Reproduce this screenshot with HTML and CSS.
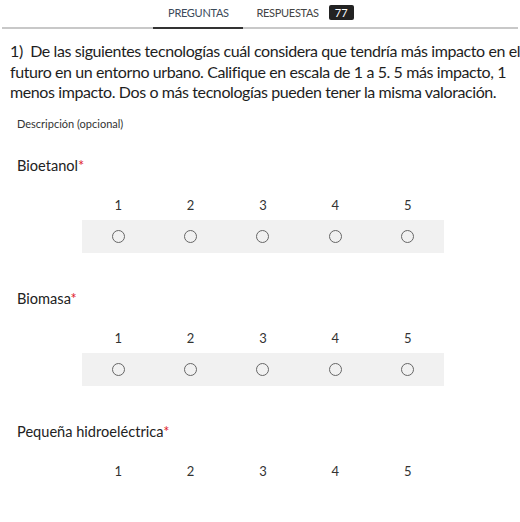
FILE: index.html
```html
<!DOCTYPE html>
<html lang="es">

<head>
    <meta charset="UTF-8">
    <meta name="viewport" content="width=device-width, initial-scale=1.0">
    <title>Encuesta</title>
    <link rel="stylesheet" href="styles.css">
</head>

<body>
    <div class="tabs">
        <span class="tab active">PREGUNTAS</span>
        <span class="tab">RESPUESTAS <b class="badge">77</b></span>
    </div>

    <p class="question">1)&nbsp; De las siguientes tecnologías cuál considera que tendría más impacto en el<br>futuro en un entorno urbano. Califique en escala de 1 a 5. 5 más impacto, 1<br>menos impacto. Dos o más tecnologías pueden tener la misma valoración.</p>
    <p class="desc">Descripción (opcional)</p>

    <div class="item">
        <div class="label">Bioetanol<span class="req">*</span></div>
        <div class="scale">
            <span>1</span><span>2</span><span>3</span><span>4</span><span>5</span>
        </div>
        <div class="scale radios">
            <i></i><i></i><i></i><i></i><i></i>
        </div>
    </div>

    <div class="item">
        <div class="label">Biomasa<span class="req">*</span></div>
        <div class="scale">
            <span>1</span><span>2</span><span>3</span><span>4</span><span>5</span>
        </div>
        <div class="scale radios">
            <i></i><i></i><i></i><i></i><i></i>
        </div>
    </div>

    <div class="item">
        <div class="label">Pequeña hidroeléctrica<span class="req">*</span></div>
        <div class="scale">
            <span>1</span><span>2</span><span>3</span><span>4</span><span>5</span>
        </div>
    </div>
</body>

</html>
```

FILE: styles.css
```css
body {
    margin: 0;
    font-family: "Lato", "Noto Sans", sans-serif;
    color: #222;
    background: #fff;
    overflow: hidden;
}

.tabs {
    display: flex;
    justify-content: center;
    margin: 0 2px;
    height: 27px;
    border-bottom: 2px solid #c8c8c8;
    font-size: 11px;
    letter-spacing: -0.3px;
    color: #444;
}

.tab {
    display: flex;
    align-items: center;
    padding: 0 13px 2px;
    height: 25px;
}

.tab.active {
    width: 64px;
    justify-content: center;
    border-bottom: 2px solid #333;
    color: #3c4a5a;
    margin-right: 0;
}

.badge {
    display: inline-block;
    background: #222;
    color: #fff;
    font-weight: normal;
    font-size: 11px;
    letter-spacing: 0;
    line-height: 15px;
    padding: 0 6px;
    margin-left: 10px;
    border-radius: 2px;
}

.question {
    margin: 12px 0 0 10px;
    font-size: 16px;
    letter-spacing: -0.4px;
    line-height: 20.5px;
    white-space: nowrap;
    color: #1e1e1e;
}

.desc {
    margin: 14px 0 0 17px;
    font-size: 11px;
    color: #333;
}

.item {
    padding-left: 17px;
}

.label {
    margin-top: 27px;
    font-size: 14.6px;
    color: #222;
}

.label .req {
    color: #e0232e;
}

.scale {
    display: grid;
    grid-template-columns: repeat(5, 72.4px);
    width: 362px;
    margin-left: 65px;
    justify-items: center;
    font-size: 13px;
    color: #333;
}

.scale span {
    padding-top: 22px;
    line-height: 18px;
}

.radios {
    background: #f1f1f1;
    height: 33px;
    align-items: center;
    margin-top: 6px;
    margin-bottom: 37px;
}

.radios i {
    width: 11px;
    height: 11px;
    border: 1px solid #666;
    border-radius: 50%;
}
```
